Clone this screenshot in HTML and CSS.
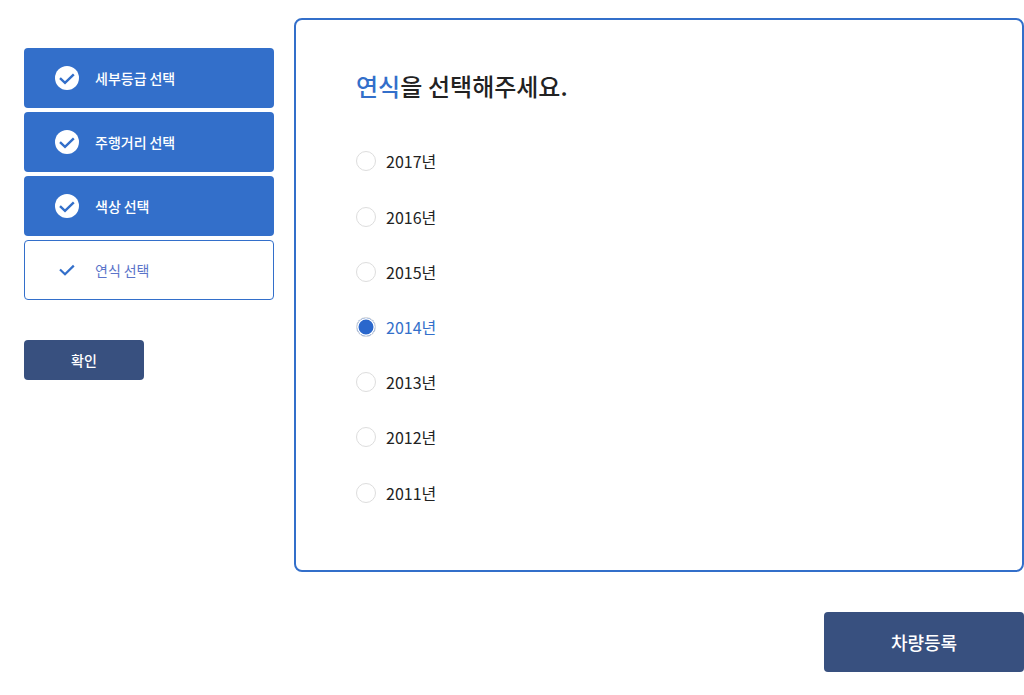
FILE: index.html
```html
<!DOCTYPE html>
<html lang="ko">
<head>
    <meta charset="UTF-8">
    <meta name="viewport" content="width=device-width, initial-scale=1.0">
    <title>차량등록</title>
    <link rel="stylesheet" href="styles.css">
</head>
<body>
    <div class="container">
        <div class="sidebar">
            <ul class="steps">
                <li class="step done">
                    <span class="step-icon">
                        <svg width="24" height="24" viewBox="0 0 24 24"><circle cx="12" cy="12" r="12" fill="#fff"/><path d="M5 12.2l5 4.7 8.8-8.6" fill="none" stroke="#336fca" stroke-width="2.4"/></svg>
                    </span>
                    <span>세부등급 선택</span>
                </li>
                <li class="step done">
                    <span class="step-icon">
                        <svg width="24" height="24" viewBox="0 0 24 24"><circle cx="12" cy="12" r="12" fill="#fff"/><path d="M5 12.2l5 4.7 8.8-8.6" fill="none" stroke="#336fca" stroke-width="2.4"/></svg>
                    </span>
                    <span>주행거리 선택</span>
                </li>
                <li class="step done">
                    <span class="step-icon">
                        <svg width="24" height="24" viewBox="0 0 24 24"><circle cx="12" cy="12" r="12" fill="#fff"/><path d="M5 12.2l5 4.7 8.8-8.6" fill="none" stroke="#336fca" stroke-width="2.4"/></svg>
                    </span>
                    <span>색상 선택</span>
                </li>
                <li class="step current">
                    <span class="step-icon">
                        <svg width="24" height="24" viewBox="0 0 24 24"><path d="M5 11.5l5 4.7 8.8-8.6" fill="none" stroke="#336fca" stroke-width="2.2"/></svg>
                    </span>
                    <span>연식 선택</span>
                </li>
            </ul>
            <button type="button" class="btn-confirm">확인</button>
        </div>
        <div class="content">
            <h2 class="title"><em>연식</em>을 선택해주세요.</h2>
            <div class="year-list">
                <label class="year"><span class="radio"></span>2017년</label>
                <label class="year"><span class="radio"></span>2016년</label>
                <label class="year"><span class="radio"></span>2015년</label>
                <label class="year selected"><span class="radio"></span>2014년</label>
                <label class="year"><span class="radio"></span>2013년</label>
                <label class="year"><span class="radio"></span>2012년</label>
                <label class="year"><span class="radio"></span>2011년</label>
            </div>
        </div>
    </div>
    <div class="footer">
        <button type="button" class="btn-register">차량등록</button>
    </div>
</body>
</html>
```

FILE: styles.css
```css
* {
    box-sizing: border-box;
}

body {
    font-family: "Noto Sans CJK KR", "Noto Sans", sans-serif;
    margin: 0;
    padding: 18px 0 0 24px;
    background-color: #fff;
    color: #222;
}

.container {
    display: flex;
    gap: 20px;
}

.sidebar {
    width: 250px;
    padding-top: 30px;
}

.steps {
    list-style: none;
    margin: 0 0 40px;
    padding: 0;
    display: flex;
    flex-direction: column;
    gap: 4px;
}

.step {
    display: flex;
    align-items: center;
    gap: 16px;
    height: 60px;
    padding-left: 31px;
    border-radius: 4px;
    font-size: 14px;
    word-spacing: -1px;
}

.step-icon {
    display: flex;
    width: 24px;
    height: 24px;
}

.step.done {
    background-color: #336fca;
    color: #fff;
    font-weight: 500;
}

.step.current {
    background-color: #fff;
    border: 1px solid #336fca;
    padding-left: 30px;
    color: #5b74c9;
}

.btn-confirm {
    display: block;
    width: 120px;
    height: 40px;
    padding: 0;
    border: 0;
    border-radius: 4px;
    background-color: #38507f;
    color: #fff;
    font-family: inherit;
    font-size: 14px;
    font-weight: 500;
}

.content {
    width: 730px;
    height: 554px;
    padding: 46px 60px 0;
    border: 2px solid #336fca;
    border-radius: 8px;
}

.title {
    margin: 0 0 40.4px;
    font-size: 24px;
    line-height: 40px;
    font-weight: 500;
    word-spacing: -1px;
    color: #222;
}

.title em {
    font-style: normal;
    color: #336fca;
}

.year-list {
    display: flex;
    flex-direction: column;
    gap: 25.2px;
}

.year {
    display: flex;
    align-items: center;
    gap: 10px;
    height: 30px;
    font-size: 16px;
    color: #222;
}

.radio {
    width: 20px;
    height: 20px;
    border: 1px solid #ddd;
    border-radius: 50%;
    background-color: #fff;
}

.year.selected {
    color: #336fca;
}

.year.selected .radio {
    background-color: #2a67cc;
    box-shadow: inset 0 0 0 1.5px #fff;
}

.footer {
    display: flex;
    justify-content: flex-end;
    padding-top: 40px;
}

.btn-register {
    width: 200px;
    height: 60px;
    border: 0;
    border-radius: 4px;
    background-color: #38507f;
    color: #fff;
    font-family: inherit;
    font-size: 18px;
    font-weight: 500;
}
```
